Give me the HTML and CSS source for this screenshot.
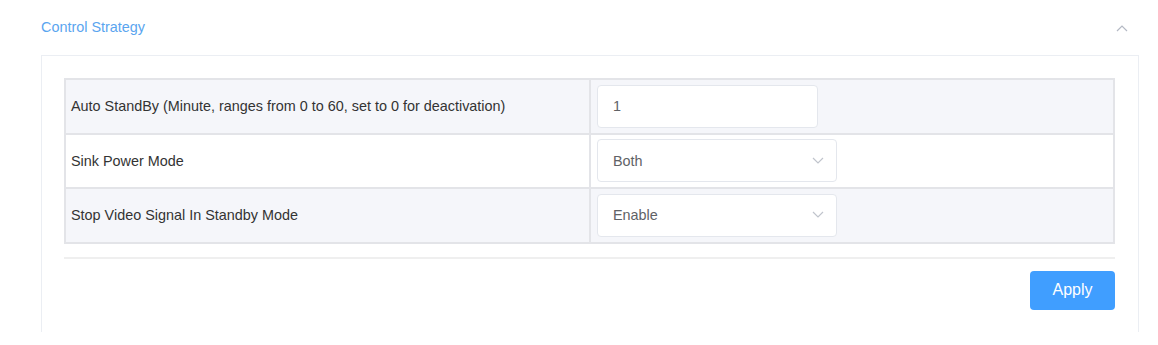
FILE: index.html
```html
<!DOCTYPE html>
<html lang="en">
<head>
    <meta charset="UTF-8">
    <title>Control Strategy</title>
    <link rel="stylesheet" href="styles.css">
</head>
<body>
    <div class="section">
        <div class="section-head">
            <span class="section-title">Control Strategy</span>
            <svg class="collapse-icon" width="12" height="8" viewBox="0 0 12 8">
                <path d="M1 7 L6 2 L11 7" fill="none" stroke="#b4b9c4" stroke-width="1.2"/>
            </svg>
        </div>

        <div class="panel">
            <table class="settings">
                <tr class="shaded">
                    <td class="label">Auto StandBy (Minute, ranges from 0 to 60, set to 0 for deactivation)</td>
                    <td class="value">
                        <div class="field field-input">1</div>
                    </td>
                </tr>
                <tr>
                    <td class="label">Sink Power Mode</td>
                    <td class="value">
                        <div class="field field-select">
                            <span>Both</span>
                            <svg width="12" height="8" viewBox="0 0 12 8">
                                <path d="M1 1 L6 6 L11 1" fill="none" stroke="#c0c4cc" stroke-width="1.2"/>
                            </svg>
                        </div>
                    </td>
                </tr>
                <tr class="shaded">
                    <td class="label">Stop Video Signal In Standby Mode</td>
                    <td class="value">
                        <div class="field field-select">
                            <span>Enable</span>
                            <svg width="12" height="8" viewBox="0 0 12 8">
                                <path d="M1 1 L6 6 L11 1" fill="none" stroke="#c0c4cc" stroke-width="1.2"/>
                            </svg>
                        </div>
                    </td>
                </tr>
            </table>

            <div class="actions">
                <button class="apply-btn">Apply</button>
            </div>
        </div>
    </div>
</body>
</html>
```

FILE: styles.css
```css
body {
    font-family: "Liberation Sans", Arial, sans-serif;
    background-color: #ffffff;
    margin: 0;
    padding: 0;
    color: #333;
}

.section {
    padding: 0 19px 0 41px;
}

.section-head {
    height: 55px;
    display: flex;
    align-items: center;
    justify-content: space-between;
    padding-right: 11px;
}

.section-title {
    font-size: 14.4px;
    color: #5aa5ef;
    margin-top: -1px;
}

.collapse-icon {
    margin-top: 1px;
}

.panel {
    border-top: 1px solid #ebeef3;
    border-left: 1px solid #ebeef3;
    border-right: 1px solid #ebeef3;
    padding: 22px 23px 22px 22px;
}

.settings {
    width: 100%;
    border-collapse: collapse;
    border: 2px solid #e3e4e8;
}

.settings td {
    border: 2px solid #e3e4e8;
    height: 52.6px;
    padding: 0;
}

.settings tr.shaded td {
    background-color: #f5f6fa;
}

.settings .label {
    width: 518px;
    padding-left: 5px;
    font-size: 14.4px;
    color: #333;
}

.settings .value {
    padding-left: 6px;
}

.field {
    height: 43px;
    box-sizing: border-box;
    border: 1px solid #e4e7ed;
    border-radius: 4px;
    background-color: #fff;
    font-size: 14.4px;
    color: #606266;
    padding: 0 15px;
    display: flex;
    align-items: center;
}

.field-input {
    width: 221px;
}

.field-select {
    width: 240px;
    justify-content: space-between;
    padding-right: 12px;
}

.actions {
    margin-top: 13px;
    border-top: 2px solid #efefef;
    padding-top: 12px;
    display: flex;
    justify-content: flex-end;
}

.apply-btn {
    background-color: #409eff;
    color: #fff;
    border: none;
    width: 85px;
    height: 39px;
    font-family: "Liberation Sans", Arial, sans-serif;
    font-size: 16px;
    border-radius: 4px;
    cursor: pointer;
}
```
